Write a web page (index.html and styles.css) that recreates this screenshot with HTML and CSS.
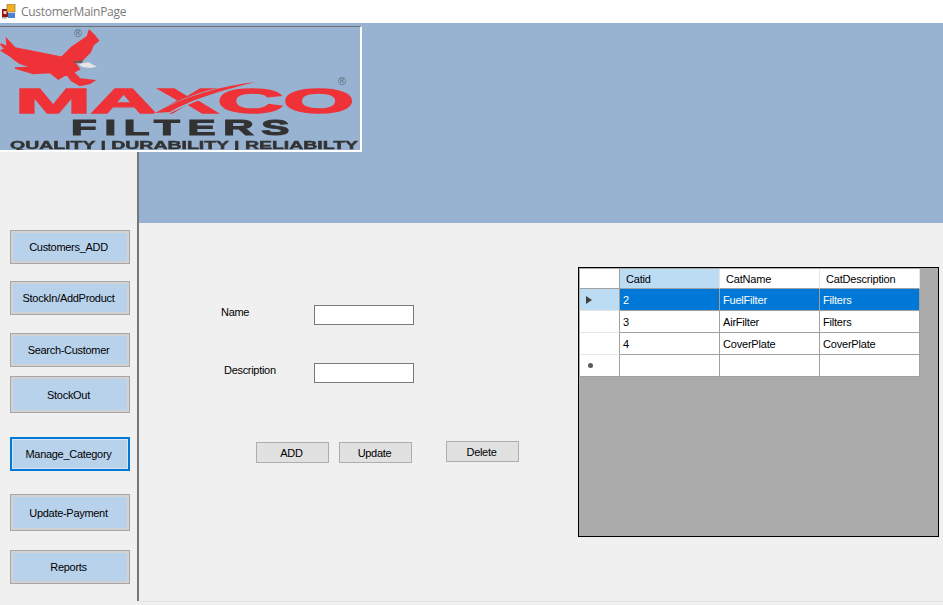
FILE: index.html
```html
<!DOCTYPE html>
<html>
<head>
 <title>CustomerMainPage</title>
 <link rel="stylesheet" href="styles.css">
</head>
<body>
<div class="titlebar">
	<svg class="app_icon" width="14" height="15" viewBox="0 0 14 15">
		<rect x="0" y="5" width="6" height="8" fill="#8c1a12"/>
		<rect x="1.5" y="7" width="3" height="3" fill="#f4d0c0"/>
		<rect x="5" y="0" width="8" height="8" fill="#f2b01e" stroke="#8a7a50" stroke-width="0.7"/>
		<rect x="6" y="9" width="7" height="5" fill="#4a82d8"/>
		<rect x="0" y="13" width="5" height="1.5" fill="#a8a8a8"/>
	</svg>
	<span class="title_text">CustomerMainPage</span>
</div>

<div class="top_band">
	<div class="logo">
		<svg width="360" height="123" viewBox="0 27 360 123">
			<defs>
				<filter id="soft"><feGaussianBlur stdDeviation="0.7"/></filter>
			</defs>
			<g filter="url(#soft)">
				<g transform="translate(0,24) scale(0.3333)">
					<path fill="#ee3338" stroke="#ee3338" stroke-width="5" d="M20 45 L45 72 L110 85 L185 100 L215 70 L262 38 L268 20 L283 35 L295 50 L280 62 L270 85 L245 110 L225 118 L238 135 L220 145 L240 165 L282 170 L270 178 L240 184 L215 170 L200 150 L175 165 L150 145 L100 148 L45 132 L100 130 L60 118 L42 105 L30 95 L5 80 L15 75 L2 60 L22 68 Z"/>
					<path fill="#6a5a5a" d="M212 114 L250 108 L245 118 Z"/>
					<path fill="#e6e6e6" d="M236 120 L265 115 L290 128 L270 132 L245 128 Z"/>
				</g>
				<text class="logo_mark" x="74" y="37">®</text>
				<text class="logo_mark" x="338" y="85">®</text>
				<text class="logo_maxco" x="15" y="112.5" textLength="339" lengthAdjust="spacingAndGlyphs">MAXCO</text>
				<path fill="#98b3d1" d="M150 116 C185 94 225 84 262 81 C225 90 190 102 165 116 Z"/>
				<path fill="#ee3338" d="M155 113 C185 96 220 86 256 82 C222 90 190 100 170 112 Z"/>
				<text class="logo_filters" x="71" y="134.5" textLength="226" lengthAdjust="spacingAndGlyphs">FILTERS</text>
				<text class="logo_tag" x="10" y="149" textLength="348" lengthAdjust="spacingAndGlyphs">QUALITY | DURABILITY | RELIABILTY</text>
			</g>
		</svg>
	</div>
</div>

<div class="lower">
	<div class="sidebar">
		<div class="nav_btn">Customers_ADD</div>
		<div class="nav_btn gap17">StockIn/AddProduct</div>
		<div class="nav_btn gap18">Search-Customer</div>
		<div class="nav_btn tall gap9">StockOut</div>
		<div class="nav_btn active gap24">Manage_Category</div>
		<div class="nav_btn tall gap23">Update-Payment</div>
		<div class="nav_btn gap19">Reports</div>
	</div>

	<div class="main">
		<div class="band_rest"></div>
		<div class="content">
			<div class="form">
				<div class="field">
					<label class="name_label">Name</label>
					<input class="text_box" type="text">
				</div>
				<div class="field second">
					<label class="desc_label">Description</label>
					<input class="text_box" type="text">
				</div>
				<div class="form_buttons">
					<div class="form_btn low">ADD</div>
					<div class="form_btn low">Update</div>
					<div class="form_btn delete">Delete</div>
				</div>
			</div>

			<div class="grid_view">
				<table>
					<tr class="head_row">
						<th class="row_head"></th>
						<th class="current_col">Catid</th>
						<th>CatName</th>
						<th>CatDescription</th>
					</tr>
					<tr class="selected">
						<td class="row_head current_row"><span class="arrow"></span></td>
						<td>2</td>
						<td>FuelFilter</td>
						<td>Filters</td>
					</tr>
					<tr>
						<td class="row_head"></td>
						<td>3</td>
						<td>AirFilter</td>
						<td>Filters</td>
					</tr>
					<tr>
						<td class="row_head"></td>
						<td>4</td>
						<td>CoverPlate</td>
						<td>CoverPlate</td>
					</tr>
					<tr class="last_row">
						<td class="row_head"><span class="new_dot"></span></td>
						<td></td>
						<td></td>
						<td></td>
					</tr>
				</table>
			</div>
		</div>
	</div>
</div>
</body>
</html>
```

FILE: styles.css
```css
html, body {
	margin: 0;
	height: 100%;
	overflow: hidden;
}

body {
	background: #f0f0f0;
	font-family: "Liberation Sans", Arial, sans-serif;
	font-size: 11px;
	letter-spacing: -0.3px;
	color: #000000;
}

.titlebar {
	height: 23px;
	background: #ffffff;
	display: flex;
	align-items: flex-start;
}

.app_icon {
	margin: 4px 0 0 2px;
}

.title_text {
	margin: 3px 0 0 5px;
	font-family: "Open Sans", "Noto Sans", sans-serif;
	font-size: 12px;
	line-height: 17px;
	letter-spacing: -0.3px;
	color: #7a7a7a;
}

.top_band {
	height: 129px;
	background: #98b3d1;
	padding-top: 3px;
	box-sizing: border-box;
}

.logo {
	width: 360px;
	height: 123px;
	border-top: 1px solid #6e6e6e;
	border-right: 2px solid #ffffff;
	border-bottom: 2px solid #ffffff;
}

.logo svg {
	display: block;
}

.logo_maxco {
	font-family: "Liberation Sans", sans-serif;
	font-weight: bold;
	font-size: 35px;
	letter-spacing: 0;
	fill: #ee3338;
	stroke: #ee3338;
	stroke-width: 1.4px;
}

.logo_filters {
	font-family: "Liberation Sans", sans-serif;
	font-weight: bold;
	font-size: 22px;
	letter-spacing: 4px;
	fill: #333232;
	stroke: #333232;
	stroke-width: 1px;
}

.logo_tag {
	font-family: "Liberation Sans", sans-serif;
	font-weight: bold;
	font-size: 10px;
	letter-spacing: 0;
	fill: #333333;
	stroke: #333333;
	stroke-width: 0.4px;
}

.logo_mark {
	font-family: "Liberation Sans", sans-serif;
	font-size: 11px;
	letter-spacing: 0;
	fill: #5e6a78;
}

.lower {
	display: flex;
	align-items: flex-start;
}

.sidebar {
	width: 137px;
	height: 371px;
	padding-top: 78px;
	border-right: 2px solid #777777;
	flex: none;
}

.nav_btn {
	width: 120px;
	height: 34px;
	margin-left: 10px;
	padding-right: 3px;
	box-sizing: border-box;
	display: flex;
	align-items: center;
	justify-content: center;
	background: #b9d2ec;
	border: 1px solid #a6a6a6;
	box-shadow: inset 0 0 0 2px #d2d2d2;
}

.nav_btn.tall { height: 37px; }
.nav_btn.gap9 { margin-top: 9px; }
.nav_btn.gap17 { margin-top: 17px; }
.nav_btn.gap18 { margin-top: 18px; }
.nav_btn.gap19 { margin-top: 19px; }
.nav_btn.gap23 { margin-top: 23px; }
.nav_btn.gap24 { margin-top: 24px; }

.nav_btn.active {
	border: 2px solid #0078d7;
	box-shadow: inset 0 0 0 1px #dce6f0;
}

.main {
	flex: 1;
	height: 450px;
	box-sizing: border-box;
	border-bottom: 1px solid #e0e0e0;
}

.band_rest {
	height: 71px;
	background: #98b3d1;
}

.content {
	display: flex;
	align-items: flex-start;
	padding-top: 44px;
}

.form {
	width: 439px;
	padding-top: 38px;
	flex: none;
}

.field {
	display: flex;
	align-items: flex-start;
	height: 20px;
	line-height: 14px;
}

.field.second {
	margin-top: 38px;
}

.name_label {
	width: 93px;
	margin-left: 82px;
}

.desc_label {
	width: 90px;
	margin-left: 85px;
}

.text_box {
	width: 100px;
	height: 20px;
	margin: 0;
	padding: 0;
	box-sizing: border-box;
	background: #ffffff;
	border: 1px solid #7a7a7a;
	border-radius: 0;
	outline: none;
}

.form_buttons {
	display: flex;
	align-items: flex-start;
	margin-top: 58px;
	padding-left: 117px;
}

.form_btn {
	width: 73px;
	height: 21px;
	padding-right: 2px;
	box-sizing: border-box;
	display: flex;
	align-items: center;
	justify-content: center;
	background: #e1e1e1;
	border: 1px solid #adadad;
}

.form_btn.low {
	margin-top: 1px;
	margin-right: 10px;
}

.form_btn.delete {
	margin-left: 24px;
}

.grid_view {
	width: 361px;
	height: 270px;
	padding: 1px;
	box-sizing: border-box;
	background: #ababab;
	border: 1px solid #000000;
	flex: none;
}

.grid_view table {
	width: 340px;
	table-layout: fixed;
	border-collapse: separate;
	border-spacing: 0;
	font-size: 11px;
}

.grid_view th,
.grid_view td {
	width: 100px;
	height: 22px;
	padding: 0 0 0 3px;
	box-sizing: border-box;
	background: #ffffff;
	border-right: 1px solid #a0a0a0;
	border-bottom: 1px solid #a0a0a0;
	font-weight: normal;
	text-align: left;
	letter-spacing: -0.2px;
}

.grid_view .head_row th {
	height: 20px;
	padding-left: 6px;
	border-right-color: #e6e6e6;
}

.grid_view .head_row th.current_col {
	background: #bcdcf4;
}

.grid_view .row_head {
	width: 40px;
	padding: 0;
	border-right-color: #a0a0a0;
	border-bottom-color: #e6e6e6;
}

.grid_view .head_row .row_head {
	border-right-color: #a0a0a0;
	border-bottom-color: #a0a0a0;
}

.grid_view .last_row .row_head {
	border-bottom-color: #a0a0a0;
}

.grid_view .selected td {
	background: #0078d7;
	color: #ffffff;
}

.grid_view .selected .row_head.current_row {
	background: #bcdcf4;
}

.arrow {
	display: block;
	width: 0;
	height: 0;
	margin-left: 6px;
	border-left: 6px solid #404040;
	border-top: 4.5px solid transparent;
	border-bottom: 4.5px solid transparent;
}

.new_dot {
	display: block;
	width: 5px;
	height: 5px;
	margin-left: 8px;
	border-radius: 50%;
	background: #5a5a5a;
}
```
